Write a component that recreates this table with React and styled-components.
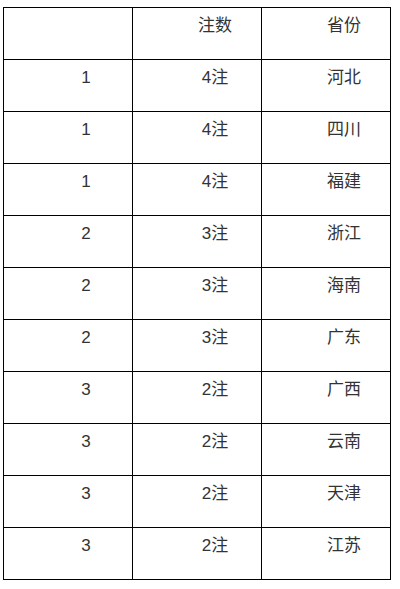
import React from 'react';
import styled, { createGlobalStyle } from 'styled-components';

const GlobalStyle = createGlobalStyle`
  html, body {
    margin: 0;
    padding: 0;
    background: #fff;
  }
`;

const Page = styled.div`
  padding: 7px 0 0 3px;
  font-family: "Liberation Sans", Arial, "Noto Sans CJK SC", sans-serif;
  font-size: 17px;
  color: #333;
`;

const Table = styled.table`
  border-collapse: collapse;
  table-layout: fixed;
  width: 388px;
`;

const Cell = styled.td`
  box-sizing: border-box;
  width: 129px;
  height: 52px;
  border: 1px solid #000;
  padding: 7px 0 0 36px;
  vertical-align: top;
  text-align: center;
  line-height: 22px;
`;

const rows = [
  ['1', '4注', '河北'],
  ['1', '4注', '四川'],
  ['1', '4注', '福建'],
  ['2', '3注', '浙江'],
  ['2', '3注', '海南'],
  ['2', '3注', '广东'],
  ['3', '2注', '广西'],
  ['3', '2注', '云南'],
  ['3', '2注', '天津'],
  ['3', '2注', '江苏'],
];

const App = () => (
  <Page>
    <GlobalStyle />
    <Table>
      <tbody>
        <tr>
          <Cell />
          <Cell>注数</Cell>
          <Cell>省份</Cell>
        </tr>
        {rows.map((row, id) => (
          <tr key={id}>
            {row.map((value, i) => (
              <Cell key={i}>{value}</Cell>
            ))}
          </tr>
        ))}
      </tbody>
    </Table>
  </Page>
);

export default App;
